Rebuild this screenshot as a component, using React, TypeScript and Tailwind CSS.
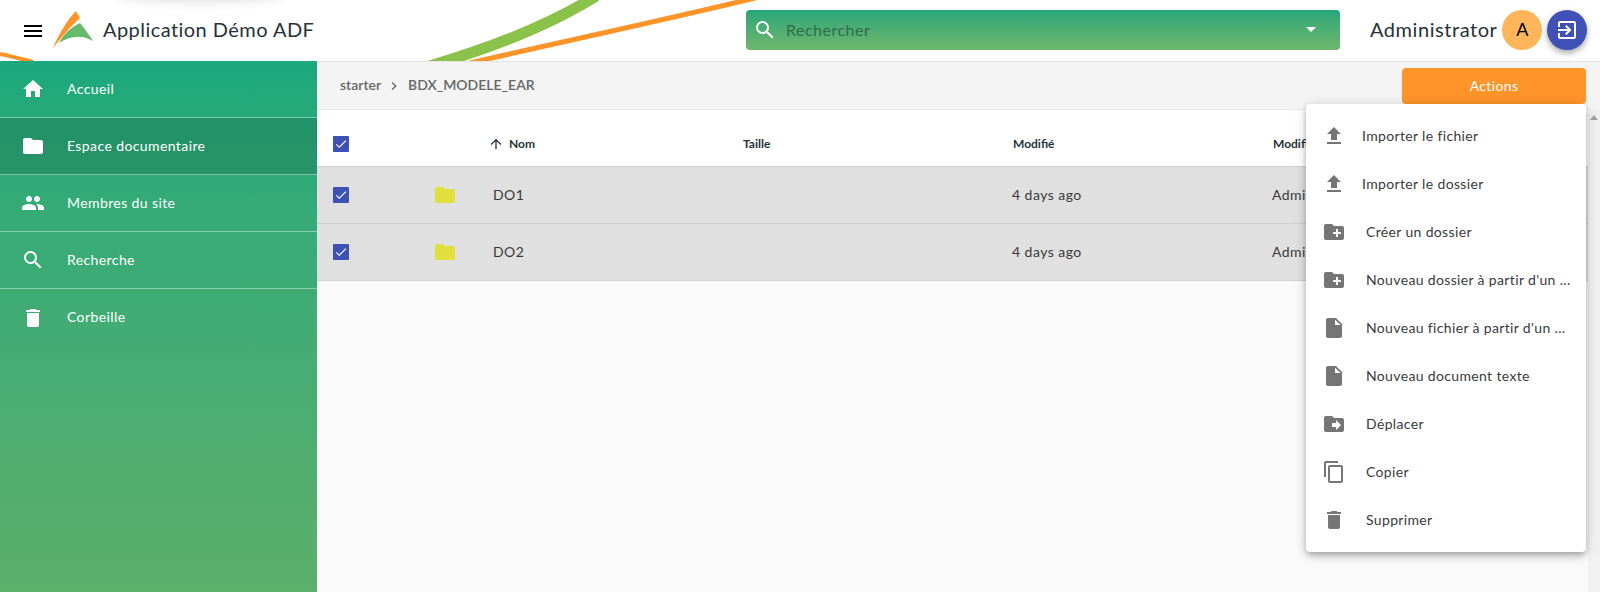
import React from 'react'
import {
  MdMenu,
  MdHome,
  MdFolder,
  MdPeople,
  MdSearch,
  MdDelete,
  MdFileUpload,
  MdCreateNewFolder,
  MdInsertDriveFile,
  MdDriveFileMove,
  MdContentCopy,
  MdExitToApp,
  MdArrowUpward,
  MdCheck,
  MdChevronRight,
} from 'react-icons/md'

const FONT = "font-['Lato','Open_Sans',sans-serif]"

const navItems = [
  { label: 'Accueil', icon: MdHome },
  { label: 'Espace documentaire', icon: MdFolder, active: true },
  { label: 'Membres du site', icon: MdPeople },
  { label: 'Recherche', icon: MdSearch },
  { label: 'Corbeille', icon: MdDelete },
]

const menuItems = [
  { label: 'Importer le fichier', icon: MdFileUpload, pad: 'ml-[16px]' },
  { label: 'Importer le dossier', icon: MdFileUpload, pad: 'ml-[16px]' },
  { label: 'Créer un dossier', icon: MdCreateNewFolder, pad: 'ml-[20px]' },
  { label: "Nouveau dossier à partir d'un ...", icon: MdCreateNewFolder, pad: 'ml-[20px]' },
  { label: "Nouveau fichier à partir d'un ...", icon: MdInsertDriveFile, pad: 'ml-[20px]' },
  { label: 'Nouveau document texte', icon: MdInsertDriveFile, pad: 'ml-[20px]' },
  { label: 'Déplacer', icon: MdDriveFileMove, pad: 'ml-[20px]' },
  { label: 'Copier', icon: MdContentCopy, pad: 'ml-[20px]' },
  { label: 'Supprimer', icon: MdDelete, pad: 'ml-[20px]' },
]

const CheckBox = () => (
  <span className="flex h-4 w-4 items-center justify-center rounded-[1px] bg-[#3f51b5]">
    <MdCheck size={14} className="text-white" />
  </span>
)

const Logo = () => (
  <svg width="42" height="40" viewBox="0 0 42 40">
    <path d="M0 38 C6 24 14 10 23 1 L27 8 C18 16 8 28 0 38Z" fill="#ff9429" />
    <path d="M6 33 C10 25 18 17 27 13 C32 19 37 26 40 31 C30 25 18 25 6 33Z" fill="#66b96a" />
  </svg>
)

const Row = ({ name }: { name: string }) => (
  <div className="flex h-[57px] items-center border-b border-[#cfcfcf] bg-[#e0e0e0] text-[14px] tracking-[0.45px] text-[#3a3a3a]">
    <div className="w-[116px] pl-[16px]">
      <CheckBox />
    </div>
    <div className="w-[60px]">
      <MdFolder size={24} className="text-[#dfdf3d]" />
    </div>
    <div className="mb-[2px] w-[519px]">{name}</div>
    <div className="mb-[2px] w-[260px]">4 days ago</div>
    <div className="mb-[2px]">Administrator</div>
  </div>
)

export default function App() {
  return (
    <div className={`${FONT} flex h-[592px] w-[1600px] flex-col overflow-hidden bg-[#fafafa]`}>
      <header className="relative flex h-[61px] shrink-0 items-center overflow-hidden bg-white">
        <svg className="absolute inset-0" width="1600" height="61" viewBox="0 0 1600 61">
          <path d="M0 54 C10 56 22 59 33 62" stroke="#ff9429" strokeWidth="4" fill="none" />
          <path d="M423 68 C485 50 545 28 596 -4" stroke="#8bc34a" strokeWidth="11" fill="none" />
          <path d="M470 63 C565 41 660 21 755 -2" stroke="#ff9429" strokeWidth="5" fill="none" />
          <ellipse cx="200" cy="-6" rx="85" ry="7" fill="#000" opacity="0.14" className="blur-[6px]" />
        </svg>
        <div className="relative flex w-[746px] items-center pl-[21px]">
          <MdMenu size={24} className="text-black" />
          <div className="ml-[8px] mt-[-2px]">
            <Logo />
          </div>
          <span className="ml-[8px] mb-[4px] text-[20px] tracking-[0.45px] text-[#263238]">Application Démo ADF</span>
        </div>
        <div className="relative mt-[-2px] flex h-[40px] w-[594px] items-center rounded-[4px] bg-gradient-to-b from-[#22a67a] to-[#6db76b] pl-[7px] pr-[24px]">
          <MdSearch size={24} className="text-white" />
          <span className="ml-[9px] flex-1 text-[16px] tracking-[0.5px] text-[#2f6b4c]">Rechercher</span>
          <span className="h-0 w-0 border-x-[5px] border-t-[5px] border-x-transparent border-t-white" />
        </div>
        <span className="relative ml-[30px] mb-[4px] text-[20px] tracking-[0.55px] text-[#263238]">Administrator</span>
        <span className="relative ml-[5px] mt-[-2px] flex h-[40px] w-[40px] items-center justify-center rounded-full bg-[#ffb55a] text-[18px] text-black">A</span>
        <span className="relative ml-[5px] mt-[-2px] flex h-[40px] w-[40px] items-center justify-center rounded-full bg-[#3f51b5] shadow-[0_3px_6px_rgba(0,0,0,0.35)]">
          <MdExitToApp size={24} className="text-white" />
        </span>
      </header>

      <div className="flex min-h-0 flex-1">
        <nav className="w-[317px] shrink-0 bg-gradient-to-b from-[#1ba87c] to-[#5bb06b]">
          {navItems.map((item) => (
            <div
              key={item.label}
              className={`flex h-[57px] items-center border-b border-[#ffffff66] pl-[21px] text-[14px] tracking-[0.4px] text-white ${item.active ? 'bg-[#00000022]' : ''} ${item.label === 'Corbeille' ? 'border-b-0' : ''}`}
            >
              <item.icon size={24} />
              <span className="mb-[2px] ml-[22px]">{item.label}</span>
            </div>
          ))}
        </nav>

        <main className="relative min-w-0 flex-1">
          <div className="flex h-[49px] items-center border-y border-t-[#e4e4e4] border-b-[#e8e8e8] bg-[#f4f4f4] pl-[23px] text-[14px] font-semibold text-[#666]">
            <span className="mb-[2px]">starter</span>
            <MdChevronRight size={16} className="ml-[5px] mr-[6px]" />
            <span className="mb-[2px]">BDX_MODELE_EAR</span>
            <button className="absolute right-[14px] top-[7px] h-[36px] w-[184px] rounded-[4px] bg-[#ff9429] pb-[2px] text-[14px] font-normal tracking-[0.35px] text-white">
              Actions
            </button>
          </div>

          <div className="flex h-[57px] items-center border-b border-[#cfcfcf] bg-white pt-[12px] text-[12px] font-bold text-[#263238]">
            <div className="w-[171px] pl-[16px]">
              <CheckBox />
            </div>
            <div className="flex w-[255px] items-center">
              <MdArrowUpward size={16} className="mr-[5px]" />
              Nom
            </div>
            <div className="w-[270px]">Taille</div>
            <div className="w-[260px]">Modifié</div>
            <div>Modifié par</div>
          </div>
          <Row name="DO1" />
          <Row name="DO2" />

          <div className="absolute right-0 top-[48px] bottom-0 flex w-[12px] justify-center bg-[#f1f1f1] pt-[6px]">
            <span className="h-0 w-0 border-x-[4px] border-b-[5px] border-x-transparent border-b-[#a3a3a3]" />
          </div>

          <div className="absolute left-[989px] top-[43px] w-[280px] rounded-[4px] bg-white py-[8px] shadow-[0_3px_5px_-1px_rgba(0,0,0,0.2),0_5px_8px_rgba(0,0,0,0.14),0_1px_14px_rgba(0,0,0,0.12)]">
            {menuItems.map((item) => (
              <div key={item.label} className="flex h-[48px] items-center pl-[16px] text-[14px] tracking-[0.35px] text-[#3a3a3a]">
                <item.icon size={24} className="shrink-0 text-[#757575]" />
                <span className={`mb-[2px] ${item.pad}`}>{item.label}</span>
              </div>
            ))}
          </div>
        </main>
      </div>
    </div>
  )
}
